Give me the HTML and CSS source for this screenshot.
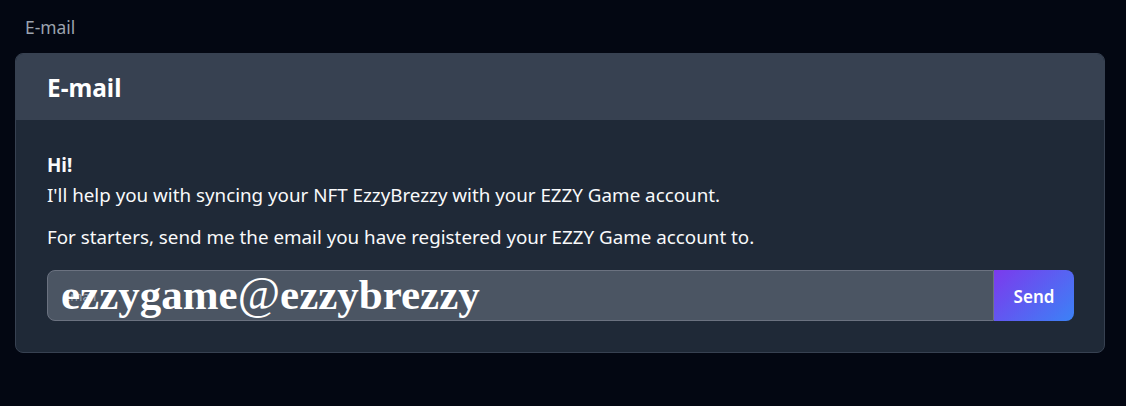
FILE: index.html
```html
<!DOCTYPE html>
<html lang="en">
<head>
<meta charset="utf-8">
<title>E-mail</title>
<link rel="stylesheet" href="styles.css">
</head>
<body>
<main class="page">
  <div class="crumb">E-mail</div>
  <section class="card">
    <header class="card-head">
      <h1 class="card-title">E-mail</h1>
    </header>
    <div class="card-body">
      <p class="hi">Hi!</p>
      <p class="line">I'll help you with syncing your NFT EzzyBrezzy with your EZZY Game account.</p>
      <p class="line line-gap">For starters, send me the email you have registered your EZZY Game account to.</p>
      <form class="send-row">
        <div class="field">
          <input class="email-input" type="text" placeholder="Email">
          <span class="overlay-text">ezzygame<span class="at">@</span>ezzybrezzy</span>
        </div>
        <button class="send-btn" type="button">Send</button>
      </form>
    </div>
  </section>
</main>
</body>
</html>
```

FILE: styles.css
```css
* { box-sizing: border-box; }
html, body { margin: 0; padding: 0; }
body {
  background: #030712;
  font-family: "Noto Sans", "Open Sans", sans-serif;
  color: #f9fafb;
  width: 1126px;
  height: 406px;
  overflow: hidden;
}
.page {
  padding: 12px 22px 0 15px;
}
.crumb {
  color: #9ca3af;
  font-size: 17.4px;
  line-height: 30px;
  padding-left: 10px;
  margin-bottom: 11px;
}
.card {
  width: 1090px;
  border: 1px solid #374151;
  border-radius: 8px;
  overflow: hidden;
  background: #1f2937;
}
.card-head {
  background: #374151;
  height: 66px;
  display: flex;
  align-items: center;
  padding-left: 31px;
}
.card-title {
  margin: 0;
  font-size: 24.4px;
  font-weight: 700;
  color: #ffffff;
}
.card-body {
  padding: 31px 30px 31px 31px;
}
.hi {
  margin: 0;
  font-weight: 700;
  font-size: 18.8px;
  line-height: 28px;
}
.line {
  margin: 2px 0 0;
  font-size: 18.8px;
  line-height: 28px;
}
.line-gap { margin-top: 14px; }
.send-row {
  display: flex;
  margin-top: 19px;
  height: 51px;
}
.field {
  position: relative;
  flex: 1;
}
.email-input {
  width: 100%;
  height: 100%;
  background: #4b5563;
  border: 1px solid #6b7280;
  border-radius: 8px 0 0 8px;
  padding: 0 15px;
  font-family: "Noto Sans", sans-serif;
  font-size: 13px;
  color: #fff;
  outline: none;
}
.email-input::placeholder { color: #9ca3af; }
.overlay-text {
  position: absolute;
  left: 14px;
  top: 2px;
  font-family: "Liberation Serif", serif;
  font-weight: 700;
  font-size: 43px;
  line-height: 44px;
  color: #ffffff;
  white-space: nowrap;
  pointer-events: none;
}
.at {
  font-weight: 400;
  font-size: 46px;
}
.send-btn {
  width: 80px;
  border: none;
  border-radius: 0 8px 8px 0;
  background: linear-gradient(135deg, #7c3aed 0%, #3b82f6 100%);
  color: #fff;
  font-family: "Noto Sans", sans-serif;
  font-weight: 600;
  font-size: 17px;
  padding: 2px 0 0;
  cursor: pointer;
}
```
